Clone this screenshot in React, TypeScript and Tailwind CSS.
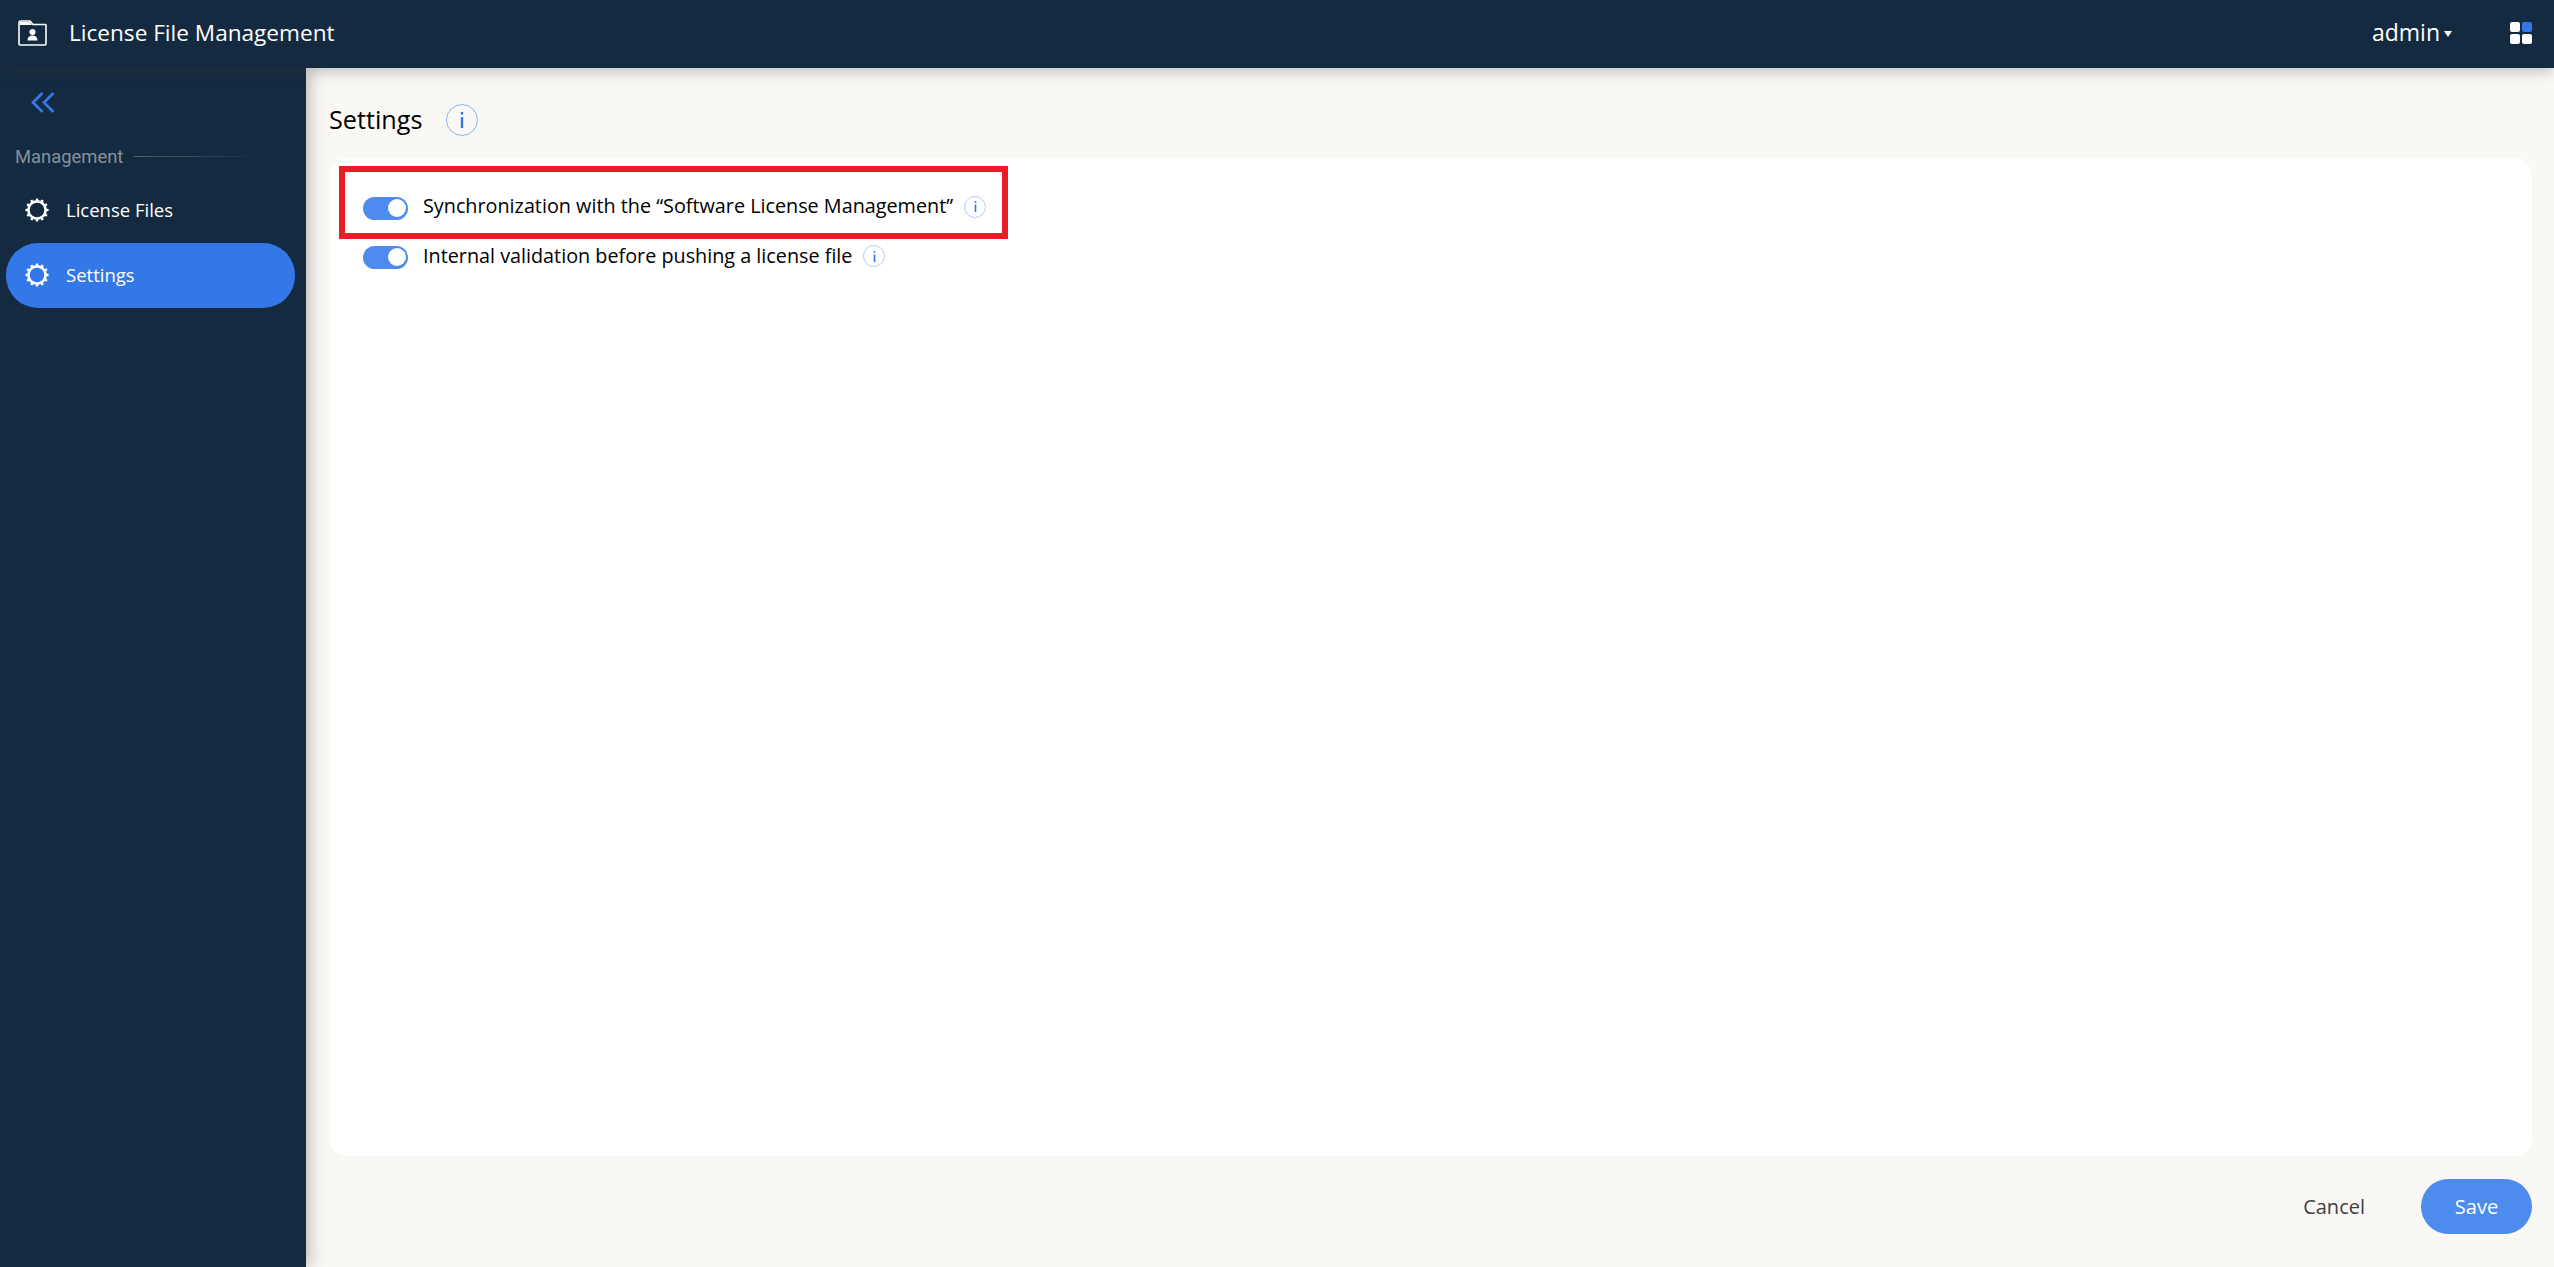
import React from 'react';

const Gear = () => (
  <svg width="24" height="24" viewBox="0 0 24 24" className="shrink-0">
    <g fill="#fff">
      {[0, 30, 60, 90, 120, 150, 180, 210, 240, 270, 300, 330].map((a) => (
        <rect key={a} x="10.8" y="0.4" width="2.4" height="3.6" rx="0.6" transform={`rotate(${a} 12 12)`} />
      ))}
    </g>
    <circle cx="12" cy="12" r="8.6" fill="none" stroke="#fff" strokeWidth="2.6" />
  </svg>
);

const InfoDot = ({ big }: { big?: boolean }) => (
  <span
    className={
      big
        ? 'flex h-[32px] w-[32px] items-center justify-center rounded-full border border-[#8db4f2]'
        : 'flex h-[22px] w-[22px] items-center justify-center rounded-full border border-[#b4cdf5]'
    }
  >
    <svg width={big ? 4 : 3} height={big ? 16 : 11} viewBox="0 0 4 16">
      <rect x="0.8" y="0" width="2.4" height="2.6" fill="#3478e8" />
      <rect x="0.8" y="5" width="2.4" height="11" fill="#3478e8" />
    </svg>
  </span>
);

const Toggle = () => (
  <span className="flex h-[23px] w-[45px] shrink-0 items-center justify-end rounded-full bg-[#4d8bef] pr-[2px]">
    <span className="h-[18px] w-[18px] rounded-full bg-white" />
  </span>
);

export default function App() {
  return (
    <div className="flex h-[1267px] w-[2554px] flex-col overflow-hidden bg-[#faf8f5] font-['Open_Sans',sans-serif]">
      {/* Top bar */}
      <header className="relative z-20 flex h-[68px] shrink-0 items-center bg-[#132a41] pl-[18px] pr-[22px] text-white shadow-[0_2px_14px_rgba(60,55,45,0.35)]">
        <svg width="29" height="26" viewBox="0 0 29 26" className="mb-[3px]">
          <path d="M1 24V2.5A1.5 1.5 0 0 1 2.5 1h9.5l3 3.5h12.5A.5.5 0 0 1 28 5v19a1 1 0 0 1-1 1H2a1 1 0 0 1-1-1z" fill="none" stroke="#fff" strokeWidth="1.6" />
          <path d="M2 2h9.5l2.6 3H2z" fill="#fff" />
          <circle cx="14.5" cy="12" r="3" fill="#fff" />
          <path d="M9.5 20.5c0-3.2 2-5 5-5s5 1.800 5 5z" fill="#fff" />
        </svg>
        <span className="ml-[22px] mb-[3px] text-[22.600px]">License File Management</span>
        <div className="ml-auto flex items-center">
          <span className="mb-[3px] text-[23px]">admin</span>
          <span className="ml-[4px] h-0 w-0 border-x-[4.500px] border-t-[6px] border-x-transparent border-t-white" />
          <div className="ml-[58px] mb-[3px] grid grid-cols-2 gap-[2px]">
            <span className="h-[10px] w-[10px] rounded-[2px] bg-white" />
            <span className="h-[10px] w-[10px] rounded-[2px] bg-[#3478e8]" />
            <span className="h-[10px] w-[10px] rounded-[2px] bg-white" />
            <span className="h-[10px] w-[10px] rounded-[2px] bg-white" />
          </div>
        </div>
      </header>

      <div className="flex min-h-0 flex-1">
        {/* Sidebar */}
        <aside className="relative z-10 w-[306px] shrink-0 bg-[#132a41] shadow-[3px_0_16px_rgba(60,55,45,0.35)]">
          <div className="pl-[31px] pt-[24px]">
            <svg width="24" height="21" viewBox="0 0 24 21" fill="none" stroke="#3478e8" strokeWidth="2.800">
              <path d="M11.500 1 2 10.500 11.500 20" />
              <path d="M22.500 1 13 10.500 22.500 20" />
            </svg>
          </div>
          <div className="mt-[30px] flex items-center pl-[15px]">
            <span className="font-['Roboto',sans-serif] text-[18.400px] text-[#87919c]">Management</span>
            <span className="ml-[11px] h-px w-[127px] bg-gradient-to-r from-[#56626e] to-[#132a41]" />
          </div>
          <nav className="mt-[7px] flex flex-col gap-[1px]">
            <a className="ml-[6px] mr-[11px] flex h-[64px] items-center pl-[19px] text-[18.500px] text-white">
              <Gear />
              <span className="ml-[17px]">License Files</span>
            </a>
            <a className="ml-[6px] mr-[11px] flex h-[65px] items-center rounded-[32px] bg-[#3478e8] pl-[19px] text-[18.500px] text-white">
              <Gear />
              <span className="ml-[17px]">Settings</span>
            </a>
          </nav>
        </aside>

        {/* Main */}
        <main className="flex min-w-0 flex-1 flex-col pl-[23px] pr-[22px]">
          <div className="flex h-[90px] shrink-0 items-center pt-[14px]">
            <h1 className="text-[25.200px] text-black">Settings</h1>
            <span className="ml-[24px]">
              <InfoDot big />
            </span>
          </div>
          <section className="relative flex h-[998px] flex-col rounded-[18px] bg-white pl-[34px] pt-[36px]">
            <div className="absolute left-[10px] top-[8px] h-[73px] w-[669px] border-[6px] border-[#ec1c24]" />
            <div className="flex h-[28px] items-center">
              <Toggle />
              <span className="ml-[15px] mb-[5px] text-[19.800px] text-black">Synchronization with the “Software License Management”</span>
              <span className="ml-[11px] mb-[3px]">
                <InfoDot />
              </span>
            </div>
            <div className="mt-[21px] flex h-[28px] items-center">
              <Toggle />
              <span className="ml-[15px] mb-[2px] text-[19.800px] text-black">Internal validation before pushing a license file</span>
              <span className="ml-[11px] mb-[2px]">
                <InfoDot />
              </span>
            </div>
          </section>
          <div className="flex flex-1 items-center justify-end pb-[10px]">
            <button className="mr-[56px] text-[20px] text-[#3c4043]">Cancel</button>
            <button className="h-[55px] w-[111px] rounded-full bg-[#4d8bef] text-[20px] text-white">Save</button>
          </div>
        </main>
      </div>
    </div>
  );
}
